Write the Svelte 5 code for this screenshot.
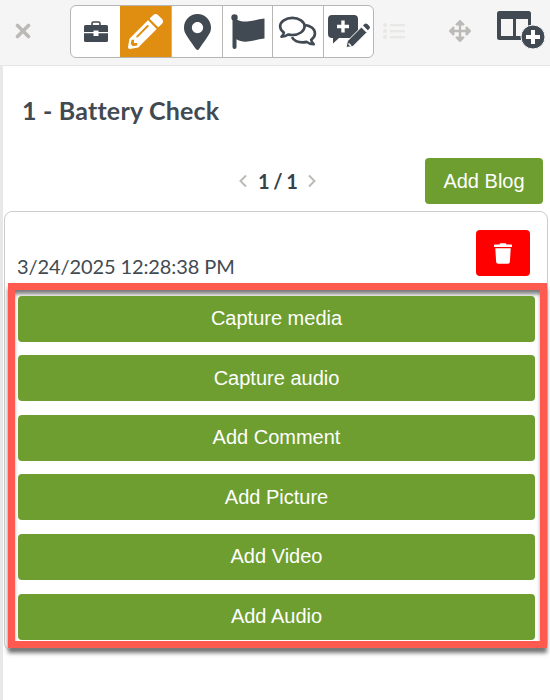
<script lang="ts">
  const actions = ["Capture media", "Capture audio", "Add Comment", "Add Picture", "Add Video", "Add Audio"];
</script>

<div class="page">
  <header class="toolbar">
    <button class="close" aria-label="Close">
      <svg viewBox="0 0 16 16" width="16" height="16"><path d="M2.500 2.500l11 11M13.500 2.500l-11 11" stroke="#bcbab6" stroke-width="3.600" stroke-linecap="round" fill="none" /></svg>
    </button>
    <nav class="tabs">
      <button class="tab" aria-label="Briefcase">
        <svg viewBox="0 0 26 22" width="26" height="22">
          <path d="M9 4V2.500C9 1.700 9.700 1 10.500 1h5C16.300 1 17 1.700 17 2.500V4" fill="none" stroke="#414a52" stroke-width="1.600" />
          <path d="M2.500 4h21A1.500 1.500 0 0 1 25 5.500V11H15.500V9.500h-5V11H1V5.500A1.500 1.500 0 0 1 2.500 4z" fill="#414a52" />
          <path d="M1 12.300h9.500V15h5v-2.700H25v7.200A1.500 1.500 0 0 1 23.500 21h-21A1.500 1.500 0 0 1 1 19.500z" fill="#414a52" />
        </svg>
      </button>
      <button class="tab active" aria-label="Edit">
        <svg viewBox="0 0 512 512" width="35" height="35"><path fill="#fff" d="M497.900 142.100l-46.100 46.100c-4.700 4.700-12.300 4.700-17 0l-111-111c-4.700-4.700-4.700-12.300 0-17l46.100-46.100c18.700-18.700 49.100-18.700 67.900 0l60.100 60.100c18.800 18.700 18.800 49.100 0 67.900zM284.200 99.800L21.600 362.400.4 483.900c-2.900 16.400 11.400 30.600 27.800 27.800l121.500-21.300 262.600-262.600c4.700-4.700 4.700-12.300 0-17l-111-111c-4.800-4.700-12.400-4.700-17.100 0zM124.100 339.900c-5.500-5.500-5.500-14.300 0-19.800l154-154c5.500-5.500 14.300-5.500 19.800 0s5.500 14.300 0 19.800l-154 154c-5.500 5.500-14.300 5.500-19.800 0zM88 424h48v36.300l-64.500 11.300-31.100-31.100L51.700 376H88v48z" /></svg>
      </button>
      <button class="tab wide" aria-label="Location">
        <svg viewBox="0 0 384 512" width="27" height="36"><path fill="#414a52" d="M172.268 501.670C26.970 291.031 0 268.413 0 192 0 85.961 85.961 0 192 0s192 85.961 192 192c0 76.413-26.970 99.031-172.268 309.670-9.535 13.774-29.930 13.773-39.464 0zM192 272c44.183 0 80-35.817 80-80s-35.817-80-80-80-80 35.817-80 80 35.817 80 80 80z" /></svg>
      </button>
      <button class="tab" aria-label="Flag">
        <svg viewBox="0 0 34 36" width="34" height="36">
          <circle cx="3.500" cy="3.500" r="3.200" fill="#414a52" />
          <rect x="1.500" y="4" width="4" height="31" rx="2" fill="#414a52" />
          <path d="M5 5c4 2.500 8 3 13 2.300S28 5 33.500 4.500v20c-5 .5-10 2-15 2.800S9 27.500 5 25z" fill="#414a52" />
        </svg>
      </button>
      <button class="tab wide" aria-label="Comments">
        <svg viewBox="0 0 42 34" width="40" height="32" fill="none" stroke="#414a52" stroke-width="2.800" stroke-linejoin="round">
          <path d="M15 2C8 2 2 6 2 11c0 2.700 1.500 5 4 6.700-.3 1.600-1.200 3-2.500 4.300 3 0 5.300-.9 7-2.300 1.400.3 2.900.5 4.500.5 7 0 13-4 13-9.200S22 2 15 2z" />
          <path d="M28.500 9.500C34.500 10.300 39 13.800 39 18.500c0 2.700-1.500 5-4 6.700.3 1.800 1.200 3.400 2.700 4.800-3.200 0-5.800-1-7.500-2.500-1.400.3-2.800.5-4.200.5-5 0-9.500-2-11.500-5.500" />
        </svg>
      </button>
      <button class="tab" aria-label="Add comment">
        <svg viewBox="0 0 42 34" width="42" height="34">
          <path d="M4 0h22a4 4 0 0 1 4 4v15a4 4 0 0 1-4 4H11l-6 5.500V23H4a4 4 0 0 1-4-4V4a4 4 0 0 1 4-4z" fill="#414a52" />
          <path d="M15 5.500v12M9 11.500h12" stroke="#fff" stroke-width="3.400" fill="none" />
          <path d="M18 32.500l1.400-6.500 14-14 5.500 5.500-14 14z" fill="#414a52" stroke="#fff" stroke-width="1" />
          <path d="M35 10.500l1.500-1.500c.8-.8 2-.8 2.800 0l2 2c.8.8.8 2 0 2.800L39.800 15.300z" fill="#414a52" />
          <path d="M20.500 28.500l2.500 2.500" stroke="#fff" stroke-width="1.600" />
        </svg>
      </button>
    </nav>
    <button class="plain list" aria-label="List">
      <svg viewBox="0 0 22 16" width="22" height="16" fill="#e8e8e6">
        <circle cx="2" cy="2" r="2" /><circle cx="2" cy="8" r="2" /><circle cx="2" cy="14" r="2" />
        <rect x="7" y="1" width="15" height="2.400" /><rect x="7" y="7" width="15" height="2.400" /><rect x="7" y="13" width="15" height="2.400" />
      </svg>
    </button>
    <button class="plain move" aria-label="Move">
      <svg viewBox="0 0 512 512" width="22" height="22"><path fill="#bcbab6" d="M352.201 425.775l-79.196 79.196c-9.373 9.373-24.568 9.373-33.941 0l-79.196-79.196c-15.119-15.119-4.411-40.971 16.971-40.970h51.162L228 284H127.196v51.162c0 21.382-25.851 32.090-40.971 16.971L7.029 272.937c-9.373-9.373-9.373-24.569 0-33.941L86.225 159.800c15.119-15.119 40.971-4.411 40.971 16.971V228H228V127.196h-51.230c-21.382 0-32.090-25.851-16.971-40.971l79.196-79.196c9.373-9.373 24.568-9.373 33.941 0l79.196 79.196c15.119 15.119 4.411 40.971-16.971 40.971h-51.162V228h100.804v-51.162c0-21.382 25.851-32.090 40.970-16.971l79.196 79.196c9.373 9.373 9.373 24.569 0 33.941L425.773 352.200c-15.119 15.119-40.971 4.411-40.970-16.971V284H284v100.804h51.230c21.382 0 32.090 25.851 16.971 40.971z" /></svg>
    </button>
    <button class="plain columns" aria-label="Add column">
      <svg viewBox="0 0 48 38" width="48" height="38">
        <rect x="0" y="0" width="34" height="29" rx="2.500" fill="#414a52" />
        <rect x="4" y="8" width="12" height="17" fill="#f5f5f5" />
        <rect x="19" y="8" width="12" height="17" fill="#f5f5f5" />
        <circle cx="36" cy="26" r="12" fill="#414a52" stroke="#f5f5f5" stroke-width="1" />
        <path d="M36 19v14M29 26h14" stroke="#fff" stroke-width="4" fill="none" />
      </svg>
    </button>
  </header>

  <main class="content">
    <h1>1 - Battery Check</h1>

    <div class="pager-row">
      <div class="pager">
        <svg viewBox="0 0 10 14" width="10" height="14"><path d="M8 1.500L2.500 7 8 12.500" fill="none" stroke="#bcbab6" stroke-width="2" /></svg>
        <span>1 / 1</span>
        <svg viewBox="0 0 10 14" width="10" height="14"><path d="M2 1.500L7.500 7 2 12.500" fill="none" stroke="#bcbab6" stroke-width="2" /></svg>
      </div>
      <button class="btn add-blog">Add Blog</button>
    </div>

    <section class="card">
      <div class="card-head">
        <span class="date">3/24/2025 12:28:38 PM</span>
        <button class="delete" aria-label="Delete">
          <svg viewBox="0 0 448 512" width="18" height="21"><path fill="#fff" d="M432 32H312l-9.400-18.700A24 24 0 0 0 281.100 0H166.800a23.720 23.720 0 0 0-21.400 13.300L136 32H16A16 16 0 0 0 0 48v32a16 16 0 0 0 16 16h416a16 16 0 0 0 16-16V48a16 16 0 0 0-16-16zM53.200 467a48 48 0 0 0 47.900 45h245.800a48 48 0 0 0 47.900-45L416 128H32z" /></svg>
        </button>
      </div>
      <div class="highlight">
        {#each actions as label}
          <button class="btn action">{label}</button>
        {/each}
      </div>
    </section>
  </main>
</div>

<style>
  :global(body) {
    margin: 0;
    background: #fff;
  }
  .page {
    width: 550px;
    height: 700px;
    overflow: hidden;
    font-family: Lato, "Open Sans", sans-serif;
    color: #414a52;
  }
  button {
    padding: 0;
    border: 0;
    background: none;
    display: flex;
    align-items: center;
    justify-content: center;
  }
  .toolbar {
    box-sizing: border-box;
    display: flex;
    align-items: flex-start;
    background: #f5f5f5;
    border-bottom: 1px solid #e5e5e5;
    height: 66px;
    padding-top: 5px;
  }
  .close {
    width: 70px;
    height: 52px;
    padding-right: 24px;
    box-sizing: border-box;
  }
  .tabs {
    display: flex;
    width: 304px;
    height: 53px;
    box-sizing: border-box;
    background: #fff;
    border: 1px solid #b8b6b2;
    border-radius: 6px;
    overflow: hidden;
  }
  .tab {
    flex: none;
    width: 50px;
    box-sizing: border-box;
    border-left: 1px solid #b8b6b2;
  }
  .tab:first-child {
    width: 49px;
    border-left: 0;
  }
  .tab.wide {
    width: 51px;
  }
  .tab.active {
    width: 51px;
    border-left: 0;
    background: #e08e12;
  }
  .plain {
    height: 52px;
  }
  .list {
    width: 40px;
  }
  .move {
    width: 42px;
    margin-left: 25px;
  }
  .columns {
    width: 48px;
    margin-left: 16px;
    padding-bottom: 2px;
  }
  .content {
    height: 634px;
    box-sizing: border-box;
    padding: 0 2px 0 1px;
    border-left: 3px solid #e8e8e8;
  }
  h1 {
    margin: 0;
    padding: 29px 0 0 18px;
    font-size: 25px;
    line-height: 30px;
    font-weight: 700;
    letter-spacing: 0.2px;
  }
  .pager-row {
    display: flex;
    align-items: center;
    margin-top: 33px;
    padding-right: 5px;
  }
  .pager {
    display: flex;
    align-items: center;
    gap: 10px;
    margin-left: 234px;
    font-size: 20px;
    font-weight: 700;
    letter-spacing: -0.6px;
    color: #37414a;
  }
  .btn {
    background: #6d9e2f;
    color: #fff;
    border-radius: 4px;
    font-family: "Liberation Sans", Arial, sans-serif;
    font-size: 20px;
  }
  .add-blog {
    width: 118px;
    height: 46px;
    margin-left: auto;
  }
  .card {
    margin-top: 7px;
    height: 440px;
    box-sizing: border-box;
    border: 1px solid #ccc;
    border-radius: 8px;
  }
  .card-head {
    display: flex;
    justify-content: space-between;
    align-items: flex-end;
    height: 71px;
    padding: 0 17px 0 12px;
  }
  .date {
    font-size: 20px;
    line-height: 24px;
    letter-spacing: -0.1px;
    margin-bottom: 5px;
  }
  .delete {
    width: 54px;
    height: 46px;
    background: #ff0000;
    border-radius: 4px;
    margin-bottom: 7px;
  }
  .highlight {
    display: flex;
    flex-direction: column;
    gap: 13.6px;
    margin: 0 0 0 3px;
    padding: 5.6px 5px 1.4px 3px;
    border: 7px solid #ff5a4f;
    box-shadow: 0 5px 4px #777, inset 0 5px 4px -1px #777;
  }
  .action {
    height: 46px;
    flex: none;
  }
</style>
